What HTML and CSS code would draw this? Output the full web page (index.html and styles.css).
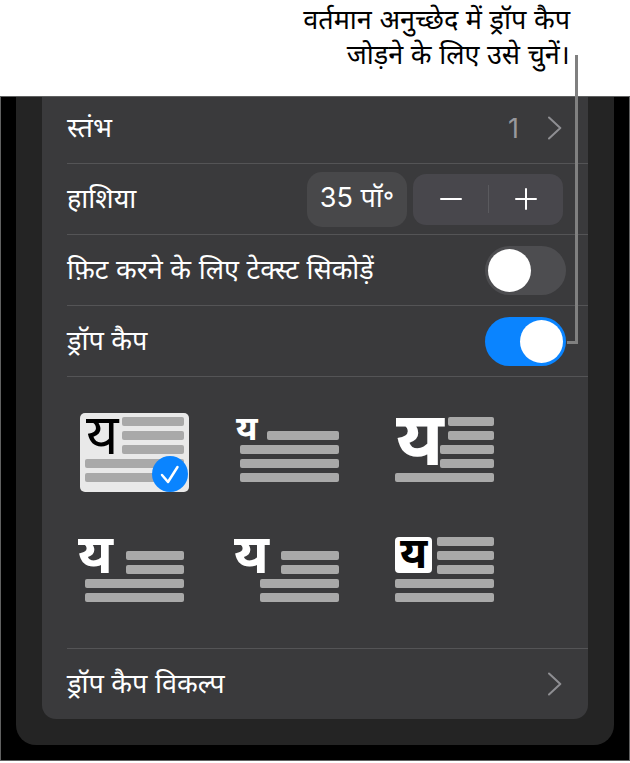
FILE: index.html
```html
<!DOCTYPE html>
<html lang="hi">
<head>
<meta charset="utf-8">
<meta name="viewport" content="width=device-width, initial-scale=1">
<title>ड्रॉप कैप</title>
<link rel="stylesheet" href="styles.css">
</head>
<body>
<figure class="figure">
  <figcaption class="callout">वर्तमान अनुच्छेद में ड्रॉप कैप<br>जोड़ने के लिए उसे चुनें।</figcaption>
  <div class="leader" aria-hidden="true"></div>
  <main class="screen">
    <div class="sheet">
      <form class="card">
        <div class="row row-first">
          <a class="row-link" href="#columns">
            <span class="label">स्तंभ</span>
            <span class="value">1</span>
            <svg class="chevron" viewBox="0 0 14 24" aria-hidden="true"><path d="M1 1.5 12.3 12 1 22.5"/></svg>
          </a>
        </div>
        <div class="row">
          <label class="label" for="margin">हाशिया</label>
          <input class="field" id="margin" type="text" value="35 पॉ॰">
          <div class="stepper">
            <button class="step" type="button" aria-label="घटाएँ"><svg viewBox="0 0 24 24" aria-hidden="true"><path d="M2 12h20"/></svg></button>
            <button class="step" type="button" aria-label="बढ़ाएँ"><svg viewBox="0 0 24 24" aria-hidden="true"><path d="M2 12h20M12 2v20"/></svg></button>
          </div>
        </div>
        <div class="row">
          <label class="label" for="shrink">फ़िट करने के लिए टेक्स्ट सिकोड़ें</label>
          <input class="switch" id="shrink" type="checkbox" role="switch">
        </div>
        <div class="row">
          <label class="label" for="dropcap">ड्रॉप कैप</label>
          <input class="switch" id="dropcap" type="checkbox" role="switch" checked>
        </div>
        <div class="styles" role="radiogroup" aria-label="ड्रॉप कैप">
          <label class="style">
            <input class="style-input" type="radio" name="style" aria-label="1" checked>
            <svg class="thumb" viewBox="0 0 120 96">
              <rect class="paper" x="5" y="8" width="109" height="79" rx="5"/>
              <g class="lines"><rect x="47" y="12" width="62" height="9" rx="2"/><rect x="47" y="26" width="62" height="9" rx="2"/><rect x="47" y="40" width="62" height="9" rx="2"/><rect x="10" y="54" width="99" height="9" rx="2"/><rect x="10" y="68" width="99" height="9" rx="2"/></g>
              <text class="glyph glyph-thin" x="11" y="49">य</text>
              <circle class="badge" cx="95" cy="69" r="18"/>
              <path class="tick" d="m87 70 6 7 9.500-15"/>
            </svg>
          </label>
          <label class="style">
            <input class="style-input" type="radio" name="style" aria-label="2">
            <svg class="thumb" viewBox="0 0 120 96">
              <g class="lines"><rect x="37" y="26" width="72" height="9" rx="2"/><rect x="10" y="40" width="99" height="9" rx="2"/><rect x="10" y="54" width="99" height="9" rx="2"/><rect x="10" y="68" width="99" height="9" rx="2"/></g>
              <text class="glyph glyph-small" x="6" y="35">य</text>
            </svg>
          </label>
          <label class="style">
            <input class="style-input" type="radio" name="style" aria-label="3">
            <svg class="thumb" viewBox="0 0 120 96">
              <g class="lines"><rect x="63" y="12" width="46" height="9" rx="2"/><rect x="63" y="26" width="46" height="9" rx="2"/><rect x="55" y="40" width="54" height="9" rx="2"/><rect x="55" y="54" width="54" height="9" rx="2"/><rect x="10" y="68" width="99" height="9" rx="2"/></g>
              <text class="glyph glyph-large" x="11" y="60">य</text>
            </svg>
          </label>
          <label class="style">
            <input class="style-input" type="radio" name="style" aria-label="4">
            <svg class="thumb" viewBox="0 0 120 96">
              <g class="lines"><rect x="51" y="26" width="58" height="9" rx="2"/><rect x="51" y="40" width="58" height="9" rx="2"/><rect x="10" y="54" width="99" height="9" rx="2"/><rect x="10" y="68" width="99" height="9" rx="2"/></g>
              <text class="glyph glyph-medium" x="3" y="48">य</text>
            </svg>
          </label>
          <label class="style">
            <input class="style-input" type="radio" name="style" aria-label="5">
            <svg class="thumb" viewBox="0 0 120 96">
              <g class="lines"><rect x="51" y="26" width="58" height="9" rx="2"/><rect x="51" y="40" width="58" height="9" rx="2"/><rect x="30" y="54" width="79" height="9" rx="2"/><rect x="30" y="68" width="79" height="9" rx="2"/></g>
              <text class="glyph glyph-medium" x="4" y="48">य</text>
            </svg>
          </label>
          <label class="style">
            <input class="style-input" type="radio" name="style" aria-label="6">
            <svg class="thumb" viewBox="0 0 120 96">
              <g class="lines"><rect x="52" y="12" width="57" height="9" rx="2"/><rect x="52" y="26" width="57" height="9" rx="2"/><rect x="52" y="40" width="57" height="9" rx="2"/><rect x="10" y="54" width="99" height="9" rx="2"/><rect x="10" y="68" width="99" height="9" rx="2"/></g>
              <rect class="tile" x="10" y="12" width="37" height="36" rx="4"/>
              <text class="glyph glyph-tile" x="15" y="43">य</text>
            </svg>
          </label>
        </div>
        <div class="row row-last">
          <a class="row-link" href="#options">
            <span class="label">ड्रॉप कैप विकल्प</span>
            <svg class="chevron" viewBox="0 0 14 24" aria-hidden="true"><path d="M1 1.5 12.3 12 1 22.5"/></svg>
          </a>
        </div>
      </form>
    </div>
  </main>
</figure>
</body>
</html>
```
FILE: styles.css
```css
* {
  box-sizing: border-box;
}

body {
  margin: 0;
  background: #fff;
  color: #fff;
  font-family: Inter, "Noto Sans Devanagari", "Noto Sans", sans-serif;
  font-size: 27px;
}

.figure {
  position: relative;
  margin: 0;
}

.callout {
  padding: 2px 60px 24px 20px;
  color: #000;
  line-height: 35px;
  text-align: right;
}

/* Leader line from the caption down to the drop cap switch */
.leader {
  position: absolute;
  z-index: 1;
  top: 55px;
  right: 52px;
  width: 11px;
  height: 289px;
  border: solid #808080;
  border-width: 0 3px 3px 0;
}

.screen {
  padding: 0 15px 15px;
  border: 1px solid #606161;
  background: #000;
}

.sheet {
  padding: 0 26px 26px;
  border-radius: 0 0 20px 20px;
  background: #242424;
}

.card {
  padding-left: 25px;
  border-radius: 0 0 14px 14px;
  background: #3a3a3c;
}

.row {
  display: flex;
  align-items: center;
  height: 71px;
  padding-right: 22px;
  border-bottom: 1px solid #545456;
}

.row-first {
  height: 67px;
  padding-bottom: 4px;
}

.row-last {
  height: 70px;
  border-bottom: 0;
}

.row-link {
  display: flex;
  flex: 1;
  align-items: center;
  color: inherit;
  text-decoration: none;
}

.label {
  flex: 1;
  line-height: 40px;
}

.value {
  margin-right: 29px;
  color: #98989d;
}

.chevron {
  width: 14px;
  height: 24px;
  margin-right: 4px;
  fill: none;
  stroke: #8e8e92;
  stroke-width: 2;
  stroke-linecap: round;
  stroke-linejoin: round;
}

.field {
  width: 100px;
  height: 55px;
  margin-right: 6px;
  padding: 0;
  border: 0;
  border-radius: 15px;
  background: #48484a;
  color: #fff;
  font: inherit;
  text-align: center;
}

.stepper {
  display: flex;
  width: 150px;
  height: 51px;
  margin-right: 3px;
  border-radius: 13px;
  background: #48474c;
}

.step {
  display: flex;
  flex: 1;
  align-items: center;
  justify-content: center;
  padding: 0;
  border: 0;
  background: none;
}

.step + .step {
  background: linear-gradient(#5a5a5e, #5a5a5e) left center / 1px 28px no-repeat;
}

.step svg {
  width: 24px;
  height: 24px;
  fill: none;
  stroke: #fff;
  stroke-width: 2;
  stroke-linecap: round;
}

.switch {
  display: flex;
  appearance: none;
  width: 81px;
  height: 49px;
  margin: 0;
  padding: 3px;
  border-radius: 25px;
  background: #4d4d50;
}

.switch::before {
  content: "";
  width: 43px;
  height: 43px;
  border-radius: 50%;
  background: #fff;
}

.switch:checked {
  justify-content: flex-end;
  background: #0a84ff;
}

.styles {
  display: grid;
  grid-template-columns: repeat(3, 120px);
  gap: 24px 35px;
  padding: 28px 0 27px 8px;
  border-bottom: 1px solid #545456;
}

.style {
  display: block;
  position: relative;
}

.style-input {
  position: absolute;
  inset: 0;
  opacity: 0;
}

.thumb {
  display: block;
  width: 120px;
  height: 96px;
  overflow: visible;
}

.paper {
  fill: #e9e9e9;
}

.lines {
  fill: #a9a9a9;
}

.badge {
  fill: #0a84ff;
}

.tick {
  fill: none;
  stroke: #fff;
  stroke-width: 2.5;
  stroke-linecap: round;
  stroke-linejoin: round;
}

.tile {
  fill: #fff;
}

.glyph {
  fill: #fff;
  font-weight: 700;
}

.glyph-thin {
  fill: #000;
  font-size: 56px;
  font-weight: 400;
}

.glyph-small {
  font-size: 34px;
}

.glyph-medium {
  font-size: 55px;
}

.glyph-large {
  font-size: 75px;
}

.glyph-tile {
  fill: #000;
  font-size: 43px;
}
```
